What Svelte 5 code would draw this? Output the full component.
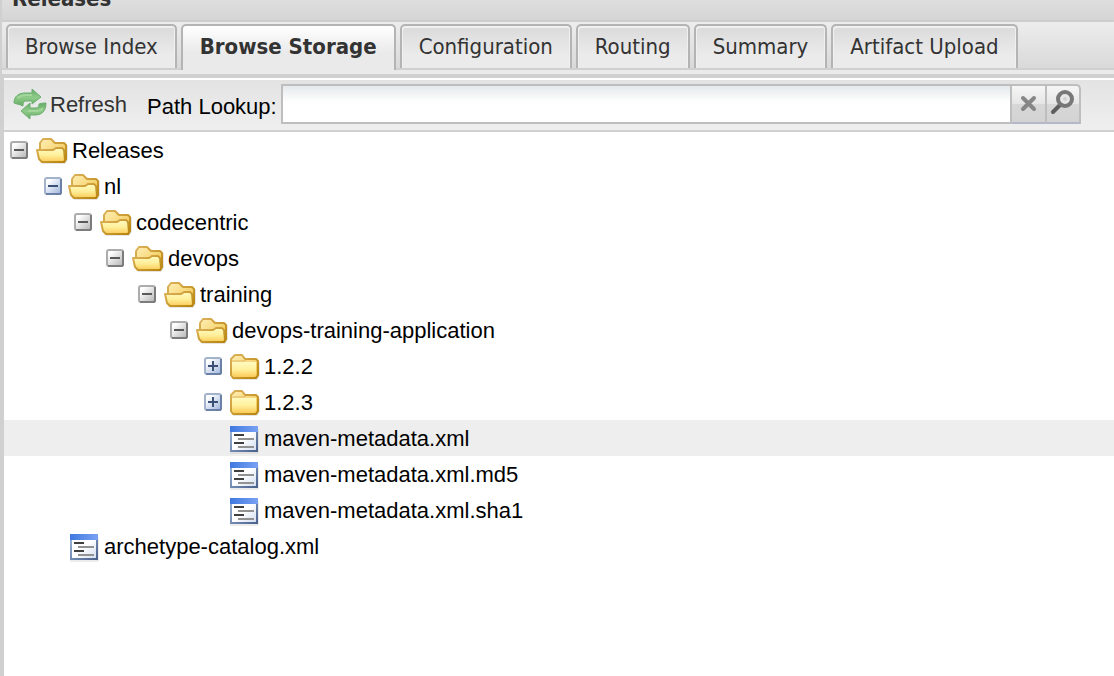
<script>
  const tabs = ['Browse Index', 'Browse Storage', 'Configuration', 'Routing', 'Summary', 'Artifact Upload'];
  let active = $state('Browse Storage');
  let path = $state('');
  let selected = $state(8);

  const nodes = [
    { name: 'Releases', level: 0, type: 'open', toggle: 'minus', tone: 'grey' },
    { name: 'nl', level: 1, type: 'open', toggle: 'minus', tone: 'blue' },
    { name: 'codecentric', level: 2, type: 'open', toggle: 'minus', tone: 'grey' },
    { name: 'devops', level: 3, type: 'open', toggle: 'minus', tone: 'grey' },
    { name: 'training', level: 4, type: 'open', toggle: 'minus', tone: 'grey' },
    { name: 'devops-training-application', level: 5, type: 'open', toggle: 'minus', tone: 'grey' },
    { name: '1.2.2', level: 6, type: 'closed', toggle: 'plus', tone: 'blue' },
    { name: '1.2.3', level: 6, type: 'closed', toggle: 'plus', tone: 'blue' },
    { name: 'maven-metadata.xml', level: 6, type: 'file' },
    { name: 'maven-metadata.xml.md5', level: 6, type: 'file' },
    { name: 'maven-metadata.xml.sha1', level: 6, type: 'file' },
    { name: 'archetype-catalog.xml', level: 1, type: 'file' }
  ];
</script>

<svg class="defs" aria-hidden="true">
  <defs>
    <linearGradient id="folderFront" x1="0" y1="0" x2="0" y2="1">
      <stop offset="0" stop-color="#fffac0" /><stop offset=".5" stop-color="#fff09c" /><stop offset="1" stop-color="#fbcb58" />
    </linearGradient>
    <linearGradient id="folderBack" x1="0" y1="0" x2="1" y2="1">
      <stop offset="0" stop-color="#fff0b8" /><stop offset="1" stop-color="#f0c040" />
    </linearGradient>
    <linearGradient id="folderEdge" x1="0" y1="0" x2="1" y2="1">
      <stop offset="0" stop-color="#ddb25a" /><stop offset="1" stop-color="#b8860e" />
    </linearGradient>
    <linearGradient id="fileTop" x1="0" y1="0" x2="1" y2="0">
      <stop offset="0" stop-color="#3f78e0" /><stop offset="1" stop-color="#79a2f3" />
    </linearGradient>
    <linearGradient id="fileEdge" x1="0" y1="0" x2="1" y2="1">
      <stop offset="0" stop-color="#9fb8dc" /><stop offset="1" stop-color="#4a628c" />
    </linearGradient>
    <linearGradient id="filePage" x1="0" y1="0" x2="1" y2="1">
      <stop offset=".5" stop-color="#fff" /><stop offset="1" stop-color="#cfdcf0" />
    </linearGradient>
    <linearGradient id="grey" x1="0" y1="0" x2="1" y2="1">
      <stop offset=".2" stop-color="#fff" /><stop offset="1" stop-color="#b4b4b4" />
    </linearGradient>
    <linearGradient id="blue" x1="0" y1="0" x2="1" y2="1">
      <stop offset=".2" stop-color="#fff" /><stop offset="1" stop-color="#9cb4da" />
    </linearGradient>
    <linearGradient id="leaf" x1="0" y1="0" x2="0" y2="1">
      <stop offset="0" stop-color="#63ac68" /><stop offset=".5" stop-color="#8fcb88" /><stop offset="1" stop-color="#62aa67" />
    </linearGradient>
  </defs>
</svg>

<main>
  <h1>Releases</h1>
  <div class="strip" role="tablist">
    {#each tabs as tab}
      <button class="tab" class:active={active === tab} role="tab" aria-selected={active === tab} onclick={() => (active = tab)}>{tab}</button>
    {/each}
  </div>
  <section>
    <form class="toolbar" onsubmit={(e) => e.preventDefault()}>
      <button class="refresh" type="button">
        <svg width="34" height="34" viewBox="0 0 34 34" aria-hidden="true">
          <g fill="url(#leaf)" stroke="#6cae70" stroke-width="1" stroke-linejoin="round">
            <path d="M1 17C1 10 6 7 12 7h7V3l9 8-9 7v-3h-5c-3 0-4 1-4 5-4-2-7-2-9-3z" />
            <path d="M33 17C33 26 28 29 22 29h-5v4l-9-8 9-8v5h4c4 0 5-1 5-4 3-1 5-1 7-1z" />
          </g>
          <path d="M5 12c2-2 5-3 8-3h6M30 22c-2 3-5 3-8 3h-7" fill="none" stroke="#a3d69b" stroke-width="2" />
        </svg>
        <span>Refresh</span>
      </button>
      <label for="path">Path Lookup:</label>
      <div class="lookup">
        <input id="path" type="text" bind:value={path} />
        <button class="trigger" type="button" aria-label="Clear" onclick={() => (path = '')}>
          <svg width="32" height="36" viewBox="0 0 32 36"><path d="M11 12l11 11M22 12L11 23" stroke="#868686" stroke-width="4" stroke-linecap="round" /></svg>
        </button>
        <button class="trigger find" type="submit" aria-label="Search">
          <svg width="32" height="36" viewBox="0 0 32 36">
            <path d="M13 19L6 26" stroke="#5e5e5e" stroke-width="4" stroke-linecap="round" />
            <circle cx="18" cy="13" r="7" fill="#e6e6e6" stroke="#777" stroke-width="4" />
            <path d="M16 13h4M18 11v4" stroke="#d2d2d2" stroke-width="2" />
          </svg>
        </button>
      </div>
    </form>

    <ul class="tree" role="tree">
      {#each nodes as node, i}
        <li role="treeitem" aria-selected={selected === i} class:selected={selected === i} style="--level: {node.level}">
          <span class="elbow {node.tone ?? ''}">
            {#if node.toggle}
              <button aria-label="Toggle {node.name}">
                <svg width="20" height="20" viewBox="0 0 20 20">
                  <rect x="1" y="2" width="16" height="16" rx="2" fill="url(#{node.tone})" stroke={node.tone === 'grey' ? '#acacac' : '#a4b3cc'} stroke-width="2" />
                  <path d="M2 18h14l1-1V3" fill="none" stroke={node.tone === 'grey' ? '#7c7c7c' : '#6b80a6'} stroke-width="2" />
                  <path d={node.toggle === 'plus' ? 'M4 10h10M9 5v10' : 'M4 10h10'} fill="none" stroke={node.tone === 'grey' ? '#5a5a5a' : '#3a5075'} stroke-width="2" />
                </svg>
              </button>
            {/if}
          </span>
          <svg class="icon" width="32" height="32" viewBox="0 0 32 32" aria-hidden="true">
            {#if node.type === 'open'}
              <path d="M6 29h23l2-3V11" fill="none" stroke="#b9b6b0" stroke-width="1" opacity=".7" />
              <path d="M4 25V9l3-4h8l4 4h9l2 2v14l-2 3H6z" fill="url(#folderBack)" stroke="url(#folderEdge)" stroke-width="2" stroke-linejoin="round" />
              <path d="M1 16h16l3-2h6l2 2 1 10-1 2H6l-3-3z" fill="url(#folderFront)" stroke="url(#folderEdge)" stroke-width="2" stroke-linejoin="round" />
            {:else if node.type === 'closed'}
              <path d="M5 29h24l2-3V12" fill="none" stroke="#b9b6b0" stroke-width="1" opacity=".7" />
              <path d="M3 12V9l4-4h7l3 4h11l2 2v14l-2 3H5l-2-3z" fill="url(#folderBack)" stroke="url(#folderEdge)" stroke-width="2" stroke-linejoin="round" />
              <path d="M4 12h24v13l-2 2H6l-2-2z" fill="url(#folderFront)" />
              <path d="M4 11h12l2-1" fill="none" stroke="#e2b75e" stroke-width="1" />
            {:else}
              <path d="M2 31h28V7" fill="none" stroke="#b8b8b8" opacity=".5" />
              <rect x="3" y="5" width="26" height="24" fill="url(#filePage)" stroke="url(#fileEdge)" stroke-width="2" />
              <path d="M2 4h28v6H2z" fill="url(#fileTop)" />
              <path d="M6 13h10M6 21h10" stroke="#3f3f3f" stroke-width="2" />
              <path d="M10 17h16M10 25h16" stroke="#929292" stroke-width="2" />
            {/if}
          </svg>
          <button class="name" onclick={() => (selected = i)}>{node.name}</button>
        </li>
      {/each}
    </ul>
  </section>
</main>

<style>
  :global(body) {
    margin: 0;
    background: #fff;
  }

  .defs {
    position: absolute;
    width: 0;
    height: 0;
  }

  main {
    display: flex;
    flex-direction: column;
    min-height: 100vh;
    box-sizing: border-box;
    overflow: hidden;
    border-left: 2px solid #d0d0d0;
    background: linear-gradient(#eaeaea, #eaeaea) 0 0 / 100% 80px no-repeat;
    font-family: 'Liberation Sans', Arial, sans-serif;
    font-size: 22px;
  }

  button {
    padding: 0;
    border: 0;
    background: none;
    color: inherit;
    font: inherit;
  }

  h1 {
    display: flex;
    align-items: flex-end;
    height: 20px;
    margin: 0;
    padding-left: 10px;
    border-bottom: 2px solid #cecece;
    background: linear-gradient(#dedede, #d5d5d5);
    color: #333;
    font-family: 'DejaVu Sans Condensed', 'DejaVu Sans', sans-serif;
    font-size: 22px;
    font-weight: bold;
    line-height: 42px;
  }

  .strip {
    display: flex;
    gap: 4px;
    height: 44px;
    padding: 2px 4px 0;
    border-bottom: 2px solid #d0d0d0;
    background: linear-gradient(#ededed, #d9d9d9);
  }

  .tab {
    box-sizing: border-box;
    height: 44px;
    padding: 0 17px;
    border: 2px solid #b4b4b4;
    border-bottom: 0;
    border-radius: 5px 5px 0 0;
    background: linear-gradient(#dadada, #ebebeb 70%);
    box-shadow: inset 1px 2px 0 #f0f0f0, inset -1px 0 0 #f0f0f0;
    color: #333;
    font-family: 'DejaVu Sans Condensed', 'DejaVu Sans', sans-serif;
    font-size: 22px;
    line-height: 42px;
    white-space: nowrap;
  }

  .tab.active {
    height: 46px;
    padding-bottom: 2px;
    background: linear-gradient(#fff, #eaeaea 60%);
    box-shadow: none;
    font-weight: bold;
  }

  section {
    flex: 1;
    margin: 4px 0 0 -2px;
    border: solid #d0d0d0;
    border-width: 4px 0 0 4px;
  }

  .toolbar {
    display: flex;
    height: 50px;
    padding-right: 33px;
    border-top: 2px solid #fff;
    border-bottom: 2px solid #d0d0d0;
    background: linear-gradient(#e3e3e3, #efefef);
  }

  .refresh {
    display: flex;
    gap: 3px;
    align-items: flex-start;
    margin-left: 9px;
    padding-top: 6px;
    color: #333;
    line-height: 38px;
  }

  label {
    margin-left: 20px;
    padding-top: 8px;
    line-height: 38px;
    white-space: nowrap;
  }

  .lookup {
    display: flex;
    flex: 1;
    height: 40px;
    margin: 4px 0 0 4px;
  }

  input {
    flex: 1;
    min-width: 0;
    box-sizing: border-box;
    padding: 0 6px;
    border: 2px solid #bebebe;
    border-radius: 0;
    background: linear-gradient(#e5e9ec, #fff 16px);
    font: inherit;
    outline: none;
  }

  .trigger {
    box-sizing: border-box;
    width: 33px;
    border: solid #bebebe;
    border-width: 2px 0;
    border-bottom-color: #b5b8c8;
    background: linear-gradient(#f6f6f6, #e5e5e5 50%, #d7d7d7 51%, #d3d3d3);
  }

  .trigger svg {
    display: block;
  }

  .find {
    width: 36px;
    border-width: 2px;
    border-bottom-color: #b5b8c8;
    border-radius: 0 5px 0 0;
  }

  .tree {
    margin: 0;
    padding: 0;
    list-style: none;
  }

  li {
    display: flex;
    height: 36px;
    padding-left: calc(var(--level) * 32px);
    align-items: center;
  }

  .selected {
    background: #eee;
  }

  .elbow {
    box-sizing: border-box;
    flex: none;
    width: 32px;
    padding-left: 6px;
  }

  .elbow.blue {
    padding-left: 8px;
  }

  .elbow button,
  .elbow svg,
  .icon {
    display: block;
  }

  .name {
    padding: 2px 0 0 4px;
    line-height: 36px;
    white-space: nowrap;
  }
</style>
